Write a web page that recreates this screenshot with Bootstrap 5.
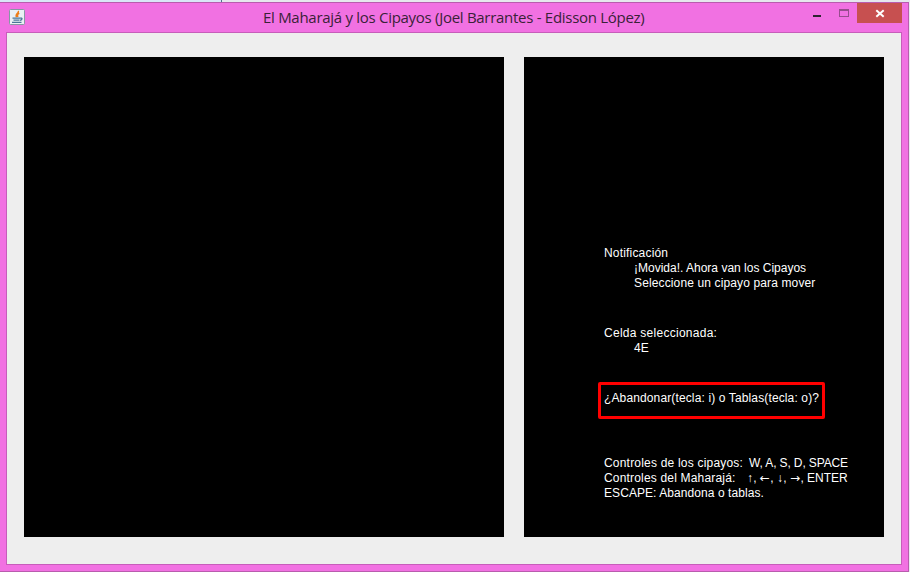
<!DOCTYPE html>
<html lang="es">
<head>
<meta charset="utf-8">
<meta name="viewport" content="width=device-width, initial-scale=1">
<title>El Maharajá y los Cipayos</title>
<link href="https://cdn.jsdelivr.net/npm/bootstrap@5.3.0/dist/css/bootstrap.min.css" rel="stylesheet">
<style>
html, body { height: 100%; }
body { background: #e9eaef; font-family: "Liberation Sans", Arial, sans-serif; }
.desktop-strip { height: 2px; background: #e6e7ed; flex: none; }
.desktop-strip span { width: 222px; background: #d9e6f7; border-right: 1px solid #51708f; }
.app-window { width: 909px; height: 570px; background: #f171e2; border: 1px solid #b95cae; border-left: 0; padding: 0 6px 6px; }
.title-bar { height: 29px; flex: none; }
.java-icon { margin: 6px 0 0 3px; }
.window-title { margin: 3px auto 0 238px; font: 15px/22px "Open Sans", "Noto Sans", sans-serif; letter-spacing: -.285px; color: #3a2238; white-space: nowrap; }
.btn-close-win { width: 45px; height: 20px; background: #c75050; }
.client { background: #eee; border: 1px solid #c75dba; padding: 24px 17px 0; gap: 20px; }
.board, .side { height: 480px; background: #000; }
.board { width: 480px; }
.side { width: 360px; color: #fff; font-size: 12px; line-height: 15px; padding: 189px 0 0 80px; white-space: pre; }
.ind { padding-left: 30px; }
.gap-a { margin-top: 35px; }
.ask { width: 227px; height: 37px; margin: 26px 0 0 -6px; border: 3px solid #f00; border-radius: 2px; padding: 6px 0 0 3px; }
.keys { margin-top: 37px; }
.side span { display: inline-block; vertical-align: top; }
.sp1 { letter-spacing: .07px; }
.sp2 { letter-spacing: .13px; }
.sp3 { letter-spacing: .18px; }
.sp4 { letter-spacing: .27px; }
.label-c { width: 145px; letter-spacing: .2px; }
.label-m { width: 143px; letter-spacing: .18px; }
.key-list { letter-spacing: -.13px; }
.arrow-v { width: 6.2px; }
.side .arrow-h { width: 10.5px; height: 15px; font: 12px/15px "DejaVu Sans", sans-serif; }
</style>
<script src="https://cdn.jsdelivr.net/npm/bootstrap@5.3.0/dist/js/bootstrap.bundle.min.js"></script>
</head>
<body class="m-0 overflow-hidden d-flex flex-column">
<div class="desktop-strip d-flex"><span></span></div>
<main class="app-window d-flex flex-column">
  <header class="title-bar d-flex align-items-start">
    <svg class="java-icon" width="16" height="16" viewBox="0 0 16 16"><rect x=".5" y=".5" width="15" height="15" rx="1" fill="#eaf0f4" stroke="#8797a5"/><path d="M9.300 1.800C10.500 4 5.500 4.800 7.600 8.200M10.300 4.300C8 5.300 8.200 6.300 9 7.800" fill="none" stroke="#ee7d18" stroke-width="1.500"/><path d="M3.500 9.200h7.500M4.500 11.200h6M11 9.200c2.700-.8 2.700 1.600 0 2.200M3 13.400h9.500" fill="none" stroke="#4a7599" stroke-width="1.300"/></svg>
    <div class="window-title">El Maharajá y los Cipayos (Joel Barrantes - Edisson López)</div>
    <div class="d-flex">
      <svg width="50" height="20" viewBox="0 0 50 20" shape-rendering="crispEdges"><path d="M6 12h8v2H6z" fill="#2d2530"/><path d="M32 6h10v8H32zM33 8v5h8V8z" fill="#974d8e" fill-rule="evenodd"/></svg>
      <div class="btn-close-win"><svg class="d-block" width="45" height="20" viewBox="0 0 45 20"><path d="M19.300 7.200l7.400 6.600M26.700 7.200l-7.400 6.600" stroke="#fff" stroke-width="2"/></svg></div>
    </div>
  </header>
  <section class="client d-flex flex-fill">
    <div class="board"></div>
    <div class="side"><div><span class="sp3">Notificación</span></div><div class="ind"><span>¡Movida!. Ahora van los Cipayos</span></div><div class="ind"><span class="sp2">Seleccione un cipayo para mover</span></div><div class="gap-a"><span class="sp4">Celda seleccionada:</span></div><div class="ind"><span>4E</span></div><div class="ask"><span class="sp2">¿Abandonar(tecla: i) o Tablas(tecla: o)?</span></div><div class="keys"><span class="label-c">Controles de los cipayos:</span><span class="key-list">W, A, S, D, SPACE</span></div><div><span class="label-m">Controles del Maharajá:</span><span class="arrow-v">↑</span>, <span class="arrow-h">←</span>, <span class="arrow-v">↓</span>, <span class="arrow-h">→</span>, ENTER</div><div><span class="sp1">ESCAPE: Abandona o tablas.</span></div></div>
  </section>
</main>
</body>
</html>
